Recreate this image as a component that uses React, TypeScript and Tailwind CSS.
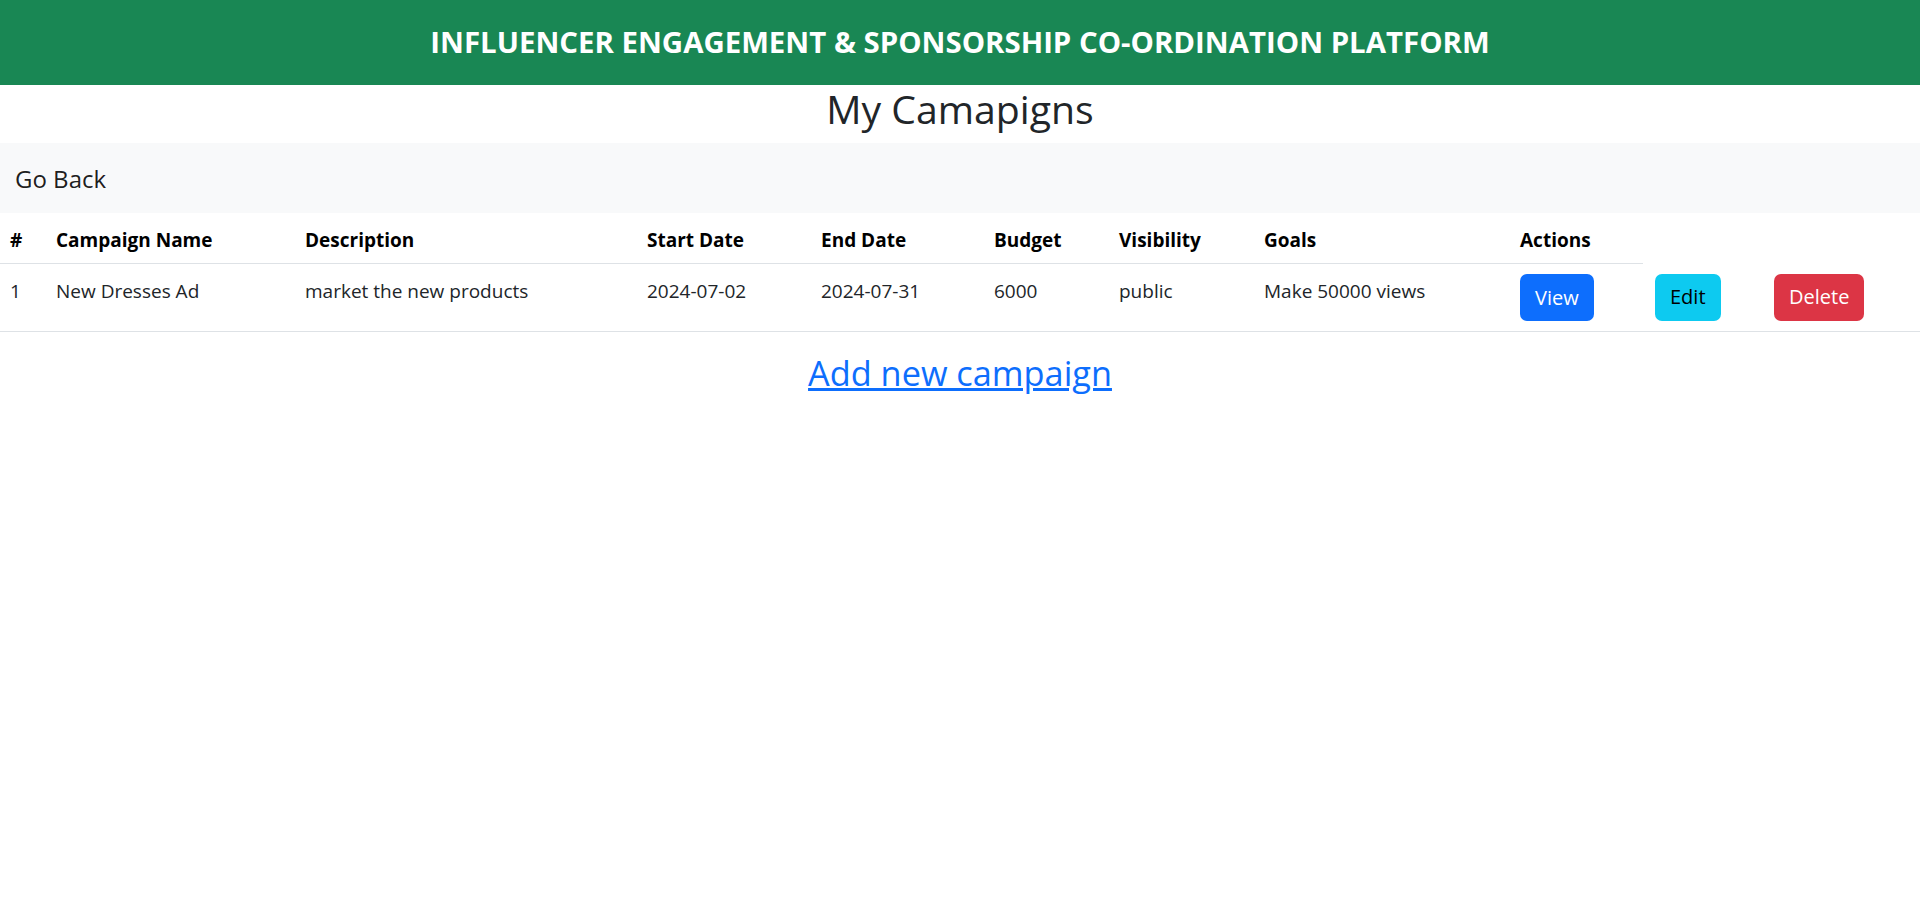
const font = { fontFamily: '"Segoe UI", "Open Sans", "Noto Sans", sans-serif' };

const headers = ['#', 'Campaign Name', 'Description', 'Start Date', 'End Date', 'Budget', 'Visibility', 'Goals', 'Actions'];

const cells = ['1', 'New Dresses Ad', 'market the new products', '2024-07-02', '2024-07-31', '6000', 'public', 'Make 50000 views'];

export default function App() {
  return (
    <div className="min-h-[918px] w-full bg-white text-[19px] leading-[30px] text-[#212529]" style={font}>
      {/* top banner */}
      <header className="flex h-[85px] items-center justify-center bg-[#198754]">
        <h4 className="text-[29.4px] font-bold leading-[1.2] text-white">
          INFLUENCER ENGAGEMENT &amp; SPONSORSHIP CO-ORDINATION PLATFORM
        </h4>
      </header>

      <h2 className="mb-[10px] text-center text-[39.2px] font-medium leading-[48px]">My Camapigns</h2>

      {/* nav bar */}
      <nav className="flex h-[70px] items-center bg-[#f8f9fa] px-[15px] pt-[2px]">
        <a href="#" className="text-[24px] leading-[1.5] text-black/90">Go Back</a>
      </nav>

      <table className="mb-[20px] w-full table-fixed border-collapse">
        <colgroup>
          <col className="w-[46px]" />
          <col className="w-[249px]" />
          <col className="w-[342px]" />
          <col className="w-[174px]" />
          <col className="w-[173px]" />
          <col className="w-[125px]" />
          <col className="w-[145px]" />
          <col className="w-[256px]" />
          <col className="w-[133px]" />
          <col className="w-[121px]" />
          <col className="w-[156px]" />
        </colgroup>
        <thead>
          <tr>
            {headers.map((h) => (
              <th key={h} className="h-[50px] border-b border-[#dee2e6] px-[10px] pt-[12px] pb-[8px] text-left align-top font-bold text-black">
                {h}
              </th>
            ))}
          </tr>
        </thead>
        <tbody>
          <tr className="border-b border-[#dee2e6] align-top">
            {cells.map((c) => (
              <td key={c} className="px-[10px] pt-[12px]">{c}</td>
            ))}
            <td className="p-[10px]">
              <button className="h-[47px] rounded-[7px] bg-[#0d6efd] px-[15px] text-[20px] text-white">View</button>
            </td>
            <td className="p-[10px]">
              <button className="ml-[2px] h-[47px] rounded-[7px] bg-[#0dcaf0] px-[15px] text-[20px] text-black">Edit</button>
            </td>
            <td className="p-[10px]">
              <button className="h-[47px] rounded-[7px] bg-[#dc3545] px-[15px] text-[20px] text-white">Delete</button>
            </td>
          </tr>
        </tbody>
      </table>

      <div className="text-center">
        <a href="#" className="text-[34.3px] font-medium leading-[42px] text-[#0d6efd] underline">
          Add new campaign
        </a>
      </div>
    </div>
  );
}
